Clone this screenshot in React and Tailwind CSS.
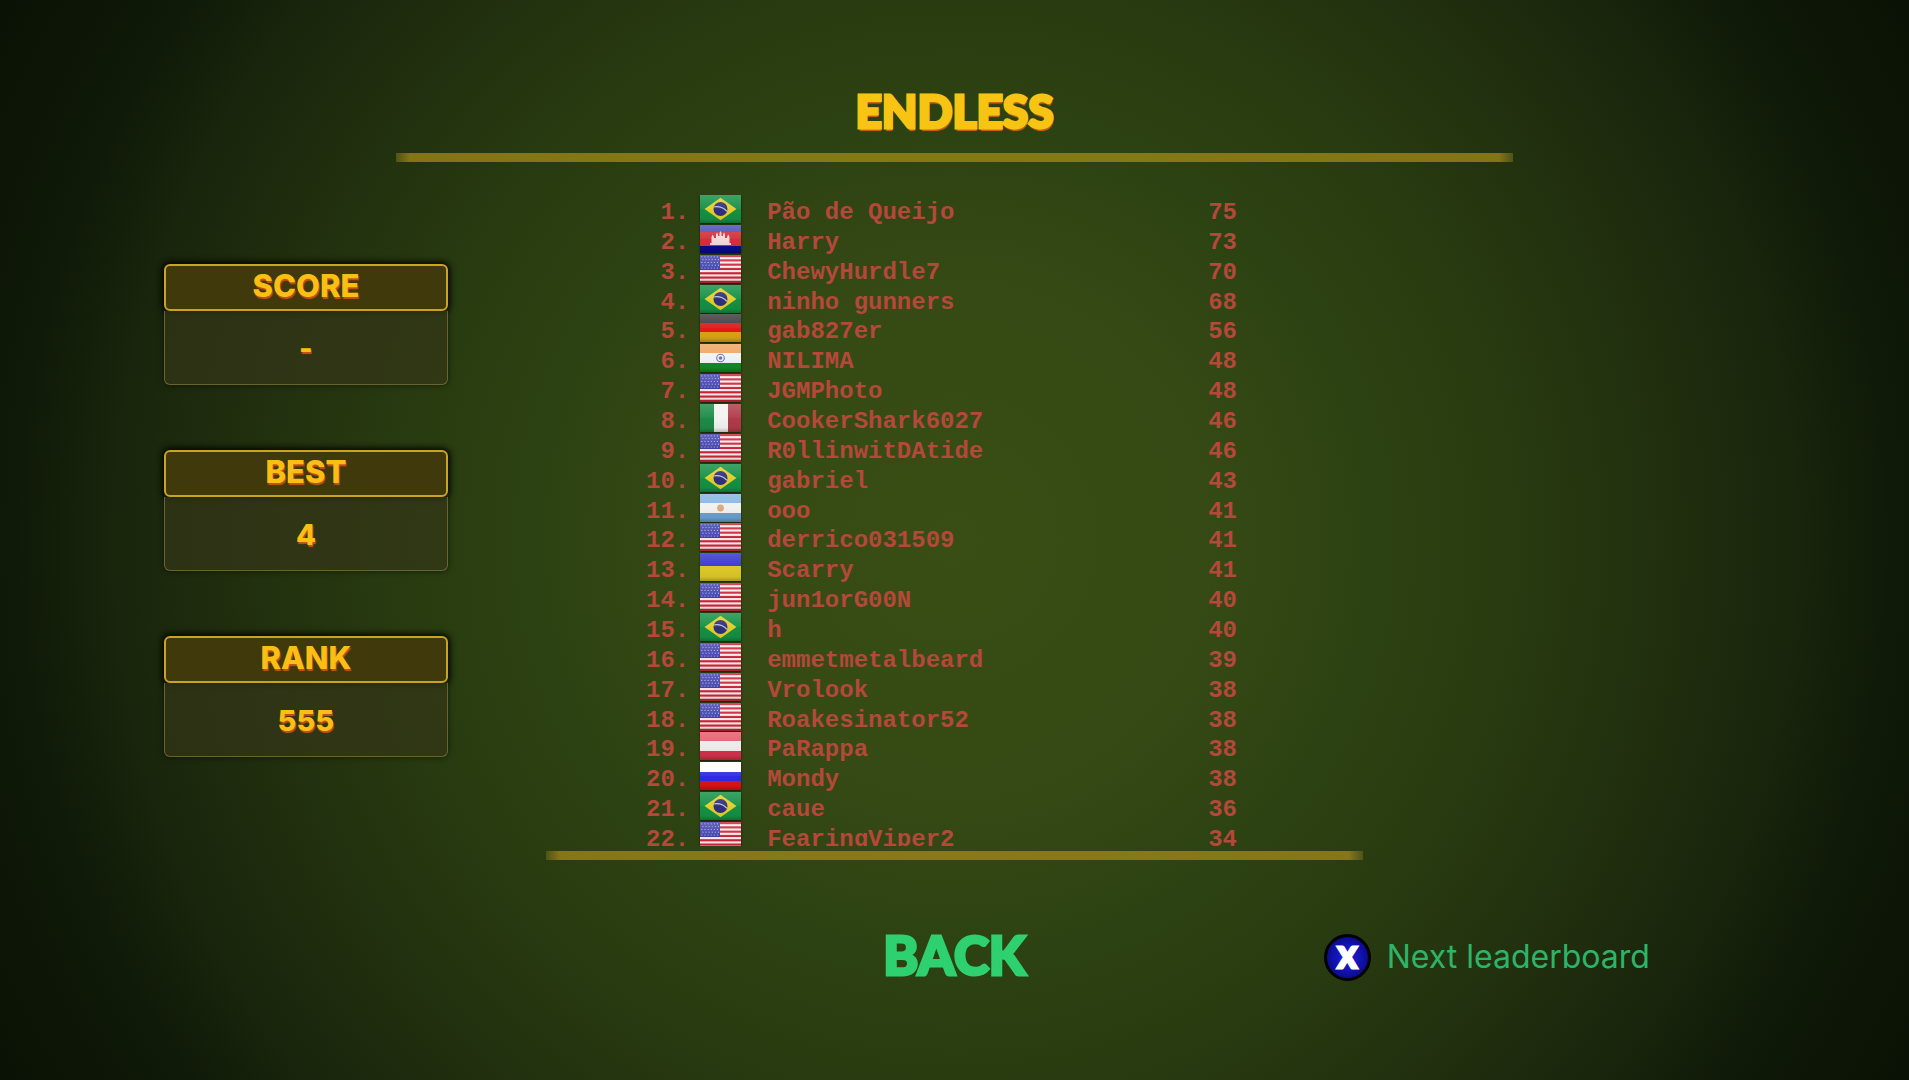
const stats = [
  { label: 'SCORE', value: '-' },
  { label: 'BEST', value: '4' },
  { label: 'RANK', value: '555' },
];

const players = [
  { country: 'br', name: 'Pão de Queijo', score: 75 },
  { country: 'kh', name: 'Harry', score: 73 },
  { country: 'us', name: 'ChewyHurdle7', score: 70 },
  { country: 'br', name: 'ninho gunners', score: 68 },
  { country: 'de', name: 'gab827er', score: 56 },
  { country: 'in', name: 'NILIMA', score: 48 },
  { country: 'us', name: 'JGMPhoto', score: 48 },
  { country: 'it', name: 'CookerShark6027', score: 46 },
  { country: 'us', name: 'R0llinwitDAtide', score: 46 },
  { country: 'br', name: 'gabriel', score: 43 },
  { country: 'ar', name: 'ooo', score: 41 },
  { country: 'us', name: 'derrico031509', score: 41 },
  { country: 'ua', name: 'Scarry', score: 41 },
  { country: 'us', name: 'jun1orG00N', score: 40 },
  { country: 'br', name: 'h', score: 40 },
  { country: 'us', name: 'emmetmetalbeard', score: 39 },
  { country: 'us', name: 'Vrolook', score: 38 },
  { country: 'us', name: 'Roakesinator52', score: 38 },
  { country: 'at', name: 'PaRappa', score: 38 },
  { country: 'ru', name: 'Mondy', score: 38 },
  { country: 'br', name: 'caue', score: 36 },
  { country: 'us', name: 'FearingViper2', score: 34 },
];

const bands = {
  kh: [['#4a4fb4', 7], ['#d2303a', 14], ['#0a0a8c', 7]],
  de: [['#3c3c3c', 9], ['#e01a1a', 9], ['#dca414', 10]],
  in: [['#f0a460', 9], ['#f2f2f4', 10], ['#128a22', 9]],
  ar: [['#86b4e2', 9], ['#f0f0ee', 10], ['#6a9fce', 9]],
  ua: [['#3434d0', 13], ['#dcc828', 15]],
  at: [['#e85a6c', 9], ['#efe9ec', 10], ['#d3304a', 9]],
  ru: [['#fdfdff', 10], ['#2c2ce0', 9], ['#dc1414', 9]],
};

function Bands({ rows }) {
  let y = 0;
  return rows.map(([color, height], i) => {
    const top = y;
    y += height;
    return <rect key={i} y={top} width="41" height={height} fill={color} />;
  });
}

function Brazil() {
  return (
    <>
      <rect width="41" height="28" fill="#149044" />
      <path d="M20.5 2.8 36.5 14 20.5 25.2 4.5 14Z" fill="#e3cd2c" />
      <circle cx="20.5" cy="14" r="7" fill="#2f2f7c" />
      <path d="M14.2 11.8c4.6-.7 9.4.9 12.7 4.4" fill="none" stroke="#b9c3dc" strokeWidth="1.3" />
    </>
  );
}

function Usa() {
  return (
    <>
      <rect width="41" height="28" fill="#f6ecec" />
      {[0, 1, 2, 3, 4, 5, 6].map((n) => (
        <rect key={n} y={n * 4.3} width="41" height="2.15" fill="#cc2438" />
      ))}
      <rect width="20" height="15" fill="#4040ae" />
      {[0, 1, 2, 3, 4].map((row) =>
        [0, 1, 2, 3, 4, 5].map((col) => (
          <circle key={row + '-' + col} cx={1.9 + col * 3.1 + (row % 2)} cy={1.8 + row * 2.8} r="0.6" fill="#b4b6e8" />
        ))
      )}
    </>
  );
}

function Italy() {
  return (
    <>
      <rect width="14" height="28" fill="#1c8a48" />
      <rect x="14" width="14" height="28" fill="#f2f2f0" />
      <rect x="28" width="13" height="28" fill="#b03a48" />
    </>
  );
}

function Flag({ country }) {
  return (
    <svg viewBox="0 0 41 28" className="block w-[41px] h-7 shadow-[0_1px_2px_rgba(0,0,0,0.6)]" role="img" aria-label={country}>
      <defs>
        <linearGradient id="gloss" x1="0" y1="0" x2="0" y2="1">
          <stop offset="0" stopColor="#fff" stopOpacity="0.18" />
          <stop offset="0.5" stopColor="#fff" stopOpacity="0.04" />
          <stop offset="0.52" stopColor="#000" stopOpacity="0" />
          <stop offset="0.85" stopColor="#000" stopOpacity="0.04" />
          <stop offset="1" stopColor="#000" stopOpacity="0.24" />
        </linearGradient>
      </defs>
      {country === 'br' && <Brazil />}
      {country === 'us' && <Usa />}
      {country === 'it' && <Italy />}
      {bands[country] && <Bands rows={bands[country]} />}
      {country === 'kh' && (
        <path d="M10 20v-2h1.500v-6l1.200-2.500 1.300 2.500v1h2V9.500l1-2 1 2V11h1.500V8l1-2 1 2v3H23V9.500l1-2 1 2V13h2v-1l1.300-2.500 1.200 2.500v6H31v2Z" fill="#f4d8d6" />
      )}
      {country === 'in' && (
        <>
          <circle cx="20.5" cy="14" r="3.8" fill="none" stroke="#6c70b4" strokeWidth="1.1" />
          <circle cx="20.5" cy="14" r="1.8" fill="#6c70b4" />
        </>
      )}
      {country === 'ar' && <circle cx="20.5" cy="14" r="3.4" fill="#dca878" />}
      <rect width="41" height="28" fill="url(#gloss)" />
    </svg>
  );
}

function StatCard({ label, value }) {
  return (
    <section className="rounded-md shadow-[0_0_6px_rgba(0,0,0,0.55)]">
      <h2 className="h-[47px] rounded-md border-2 border-[#c9a420] bg-[#40390c] text-center font-['Inter',sans-serif] font-extrabold text-[31px] leading-10 text-[#fbbf14] [text-shadow:1px_2px_1px_#c8501a] shadow-[0_0_6px_2px_rgba(0,0,0,0.8)]">
        {label}
      </h2>
      <p className="h-[74px] rounded-b-md border border-t-0 border-[#68642f] bg-[#343618]/70 pt-[18px] text-center font-['Inter',sans-serif] font-extrabold text-[29px] leading-10 text-[#fbbf14] [text-shadow:1px_2px_1px_#c8501a]">
        {value}
      </p>
    </section>
  );
}

export default function App() {
  return (
    <div className="min-h-screen flex flex-col bg-[radial-gradient(circle_farthest-side,#394e14_0%,#354a14_26%,#2d4212_44%,#283a10_60%,#202e0e_76%,#19250c_88%,#101a08_98%,#0a1205_114%)]">
      <header className="flex flex-col items-center pt-20">
        <h1 className="font-['Lato',sans-serif] font-black text-[46px] leading-[62px] text-[#f8c414] [-webkit-text-stroke:3px_#f8c414] [text-shadow:1px_3px_1px_#d4621a]">
          ENDLESS
        </h1>
        <div className="mt-[11px] h-[9px] w-[58.5%] bg-[linear-gradient(90deg,#4f5319,#837517_14px,#857917_50%,#837517_calc(100%-14px),#4f5319)]" />
      </header>

      <main className="grid grid-cols-[546fr_817fr_546fr] pt-[33px]">
        <aside className="flex flex-col gap-[65px] pt-[69px] pl-[30%] pr-[98px]">
          {stats.map((stat) => (
            <StatCard key={stat.label} label={stat.label} value={stat.value} />
          ))}
        </aside>
        <div>
          <div className="h-[651px] overflow-hidden pl-[100px]">
            <table className="h-[657px] border-collapse font-['Liberation_Mono',monospace] font-bold text-2xl leading-[23px] text-[#b4483a]">
              <tbody>
                {players.map((player, i) => (
                  <tr key={player.name}>
                    <td className="w-[43px] p-0 pt-1.5 text-right align-top">{i + 1}.</td>
                    <td className="w-[78px] p-0 pl-[11px] align-top">
                      <Flag country={player.country} />
                    </td>
                    <td className="w-[441px] p-0 pt-1.5 align-top">{player.name}</td>
                    <td className="p-0 pt-1.5 align-top">{player.score}</td>
                  </tr>
                ))}
              </tbody>
            </table>
          </div>
          <div className="mt-[5px] h-[9px] bg-[linear-gradient(90deg,#4f5319,#857617_14px,#8a7a16_50%,#857617_calc(100%-14px),#4f5319)]" />
        </div>
      </main>

      <footer className="grid grid-cols-[1fr_auto_1fr] items-center pt-16">
        <button
          type="button"
          className="col-start-2 font-['Lato',sans-serif] font-black text-[53px] leading-[62px] text-[#2ed070] [-webkit-text-stroke:3px_#2ed070]"
        >
          BACK
        </button>
        <button
          type="button"
          className="flex items-center gap-4 justify-self-start ml-[298px] pt-1 font-['Inter',sans-serif] text-[32px] leading-[48px] text-[#2eb468] whitespace-nowrap"
        >
          <span className="size-[47px] rounded-full border-[3px] border-black bg-[radial-gradient(circle,#1a1ad0_20%,#0a0a8a_75%)] text-center font-['Lato',sans-serif] font-black text-[28px] leading-[41px] text-white [-webkit-text-stroke:3px_white]">
            X
          </span>
          Next leaderboard
        </button>
      </footer>
    </div>
  );
}
